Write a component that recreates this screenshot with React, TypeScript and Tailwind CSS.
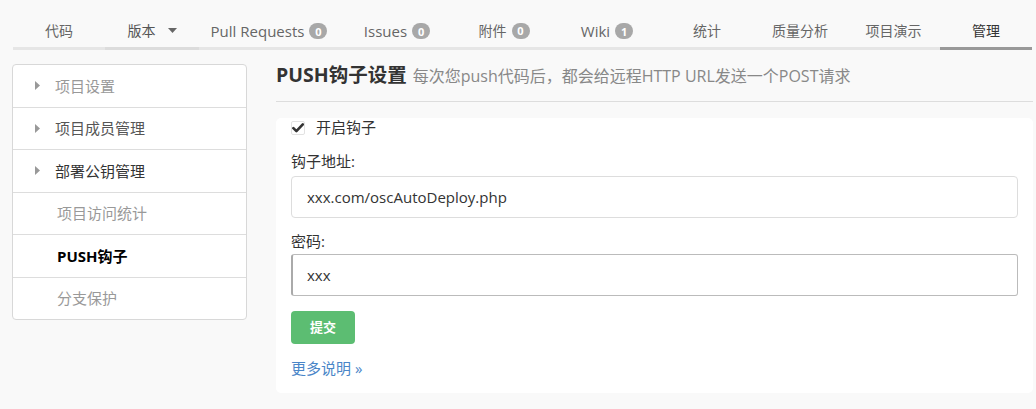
import React from "react";

const tabs = [
  { label: "代码", w: "w-[92px]" },
  { label: "版本", w: "w-[94px]", caret: true, hover: true },
  { label: "Pull Requests", w: "w-[140px]", badge: "0" },
  { label: "Issues", w: "w-[116px]", badge: "0" },
  { label: "附件", w: "w-[98px]", badge: "0" },
  { label: "Wiki", w: "w-[108px]", badge: "1" },
  { label: "统计", w: "w-[92px]" },
  { label: "质量分析", w: "w-[94px]" },
  { label: "项目演示", w: "w-[93px]" },
  { label: "管理", w: "w-[92px]", active: true },
];

const menu = [
  { label: "项目设置", caret: true, cls: "text-[#999]" },
  { label: "项目成员管理", caret: true, cls: "text-[#555]" },
  { label: "部署公钥管理", caret: true, cls: "text-[#333]" },
  { label: "项目访问统计", cls: "text-[#999] ml-[2px]" },
  { label: "PUSH钩子", cls: "text-black font-bold ml-[2px]" },
  { label: "分支保护", cls: "text-[#999] ml-[2px]" },
];

export default function App() {
  return (
    <div className="w-[1036px] h-[409px] bg-[#f9f9f9] overflow-hidden font-['Open_Sans','Noto_Sans_CJK_SC',sans-serif]">
      {/* Tabs */}
      <div className="flex pl-[13px] pt-[19px]">
        {tabs.map((t, i) => (
          <div
            key={i}
            className={`${t.w} h-[31px] flex items-start justify-center pt-[1px] border-b-[3px] ${
              t.active ? "border-[#999] text-[#333]" : t.hover ? "border-[#dcdcdc] text-[#555]" : "border-[#e6e6e6] text-[#666]"
            }`}
          >
            <span className={`flex items-center gap-[4px] ${t.label.match(/[A-Za-z]/) ? "text-[15px]" : "text-[14px]"}`}>
              {t.label}
              {t.badge && (
                <span className="ml-[1px] inline-flex items-center justify-center h-[16px] min-w-[18px] px-[5px] rounded-full bg-[#a8a8a8] text-white text-[11px] font-bold leading-none">
                  {t.badge}
                </span>
              )}
              {t.caret && (
                <svg width="9" height="5" viewBox="0 0 9 5" className="ml-[8px]">
                  <path d="M0 0h9L4.5 5z" fill="#666" />
                </svg>
              )}
            </span>
          </div>
        ))}
      </div>

      <div className="flex mt-[14px] pl-[12px]">
        {/* Side menu */}
        <div className="w-[235px] h-[256px] bg-white border border-[#d8d8d8] rounded-[4px] flex flex-col">
          {menu.map((m, i) => (
            <div
              key={i}
              className={`flex-1 flex items-center pl-[22px] text-[15px] ${i > 0 ? "border-t border-[#ddd]" : ""}`}
            >
              <span className="w-[20px]">
                {m.caret && (
                  <svg width="5" height="9" viewBox="0 0 5 9">
                    <path d="M0 0v9l5-4.5z" fill="#999" />
                  </svg>
                )}
              </span>
              <span className={m.cls}>{m.label}</span>
            </div>
          ))}
        </div>

        {/* Main */}
        <div className="ml-[29px] w-[757px]">
          <div className="-mt-[4px] flex items-baseline h-[42px] border-b border-[#ddd]">
            <span className="text-[19.5px] font-bold text-[#333]">PUSH钩子设置</span>
            <span className="ml-[6px] text-[16px] text-[#888]">每次您push代码后，都会给远程HTTP URL发送一个POST请求</span>
          </div>

          <div className="mt-[16px] bg-white rounded-[5px] h-[275px] pl-[15px] pr-[15px]">
            <label className="flex items-center h-[18px] text-[15px] text-[#333]">
              <span className="relative w-[14px] h-[14px] mt-[2px] border border-[#e2e2e2] rounded-[2px] bg-white flex items-center justify-center">
                <svg width="12" height="10" viewBox="0 0 12 10" className="absolute left-[0px] top-[1px]">
                  <path d="M1.4 5.2l3 3 6.4-6.8" stroke="#333" strokeWidth="2.6" fill="none" strokeLinecap="round" strokeLinejoin="round" />
                </svg>
              </span>
              <span className="ml-[11px]">开启钩子</span>
            </label>

            <div className="mt-[15px] text-[15px] text-[#333] leading-[20px]">钩子地址:</div>
            <div className="mt-[5px] h-[42px] border border-[#ddd] rounded-[4px] flex items-center px-[15px] text-[15px] text-[#333]">
              xxx.com/oscAutoDeploy.php
            </div>

            <div className="mt-[13px] text-[15px] text-[#333] leading-[20px]">密码:</div>
            <div className="mt-[3px] h-[42px] border border-[#bbb] border-l-[2px] border-l-[#aaa] rounded-[3px] flex items-center px-[14px] text-[15px] text-[#333]">
              xxx
            </div>

            <button className="mt-[15px] w-[64px] h-[33px] rounded-[4px] bg-[#5cbd72] text-white text-[13px] font-bold">
              提交
            </button>

            <div className="mt-[14px] text-[15px] leading-[20px] text-[#4a86c8]">更多说明 »</div>
          </div>
        </div>
      </div>
    </div>
  );
}
